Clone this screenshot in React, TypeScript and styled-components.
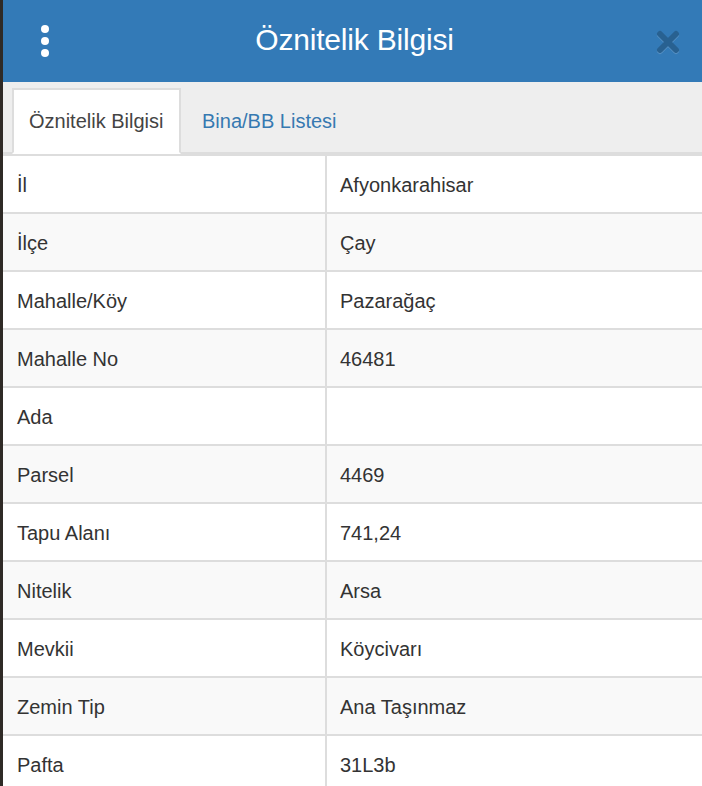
import React from "react";
import styled, { createGlobalStyle } from "styled-components";

const GlobalStyle = createGlobalStyle`
  html, body {
    margin: 0;
    padding: 0;
    background: #2f2a26;
    overflow: hidden;
  }
  body {
    font-family: "Liberation Sans", Arial, Helvetica, sans-serif;
    color: #333;
  }
`;

const Panel = styled.div`
  margin-left: 3px;
  width: 699px;
  height: 786px;
  background: #fff;
  display: flex;
  flex-direction: column;
  overflow: hidden;
`;

const Header = styled.div`
  height: 82px;
  flex-shrink: 0;
  background: #337ab7;
  display: flex;
  align-items: center;
  justify-content: space-between;
  padding: 0 22px 0 34px;
  box-sizing: border-box;
`;

const Title = styled.h1`
  margin: 0 0 2px 0;
  font-size: 30px;
  font-weight: normal;
  color: #fff;
  letter-spacing: -0.2px;
`;

const MenuButton = styled.button`
  border: 0;
  background: none;
  padding: 0;
  width: 16px;
  height: 32px;
  display: flex;
  flex-direction: column;
  align-items: center;
  justify-content: space-between;
  cursor: pointer;
`;

const Dot = styled.span`
  width: 8px;
  height: 8px;
  border-radius: 50%;
  background: #fff;
`;

const CloseButton = styled.button`
  border: 0;
  background: none;
  padding: 0;
  width: 24px;
  height: 24px;
  cursor: pointer;
  opacity: 0.2;
  filter: drop-shadow(0 1px 0 rgba(255, 255, 255, 0.9));
  margin-top: 2px;
`;

const TabBar = styled.div`
  flex-shrink: 0;
  background: #eee;
  padding: 6px 0 0 9px;
  display: flex;
  align-items: flex-end;
  border-bottom: 2px solid #ddd;
`;

const Tab = styled.div<{ $active?: boolean }>`
  height: 66px;
  box-sizing: border-box;
  padding: 0 15px 0 15px;
  display: flex;
  align-items: center;
  font-size: 20px;
  margin-bottom: -2px;
  color: ${(p) => (p.$active ? "#444" : "#3679b1")};
  background: ${(p) => (p.$active ? "#fff" : "transparent")};
  border: 2px solid ${(p) => (p.$active ? "#ddd" : "transparent")};
  border-bottom-color: transparent;
  width: ${(p) => (p.$active ? "169px" : "auto")};
  margin-right: 4px;
`;

const Table = styled.table`
  width: 100%;
  border-collapse: collapse;
  table-layout: fixed;
`;

const Row = styled.tr<{ $striped: boolean }>`
  background: ${(p) => (p.$striped ? "#f9f9f9" : "#fff")};
`;

const Cell = styled.td`
  border-top: 2px solid #ddd;
  border-bottom: 0;
  padding: 15px 14px 13px 14px;
  height: 28px;
  line-height: 28px;
  font-size: 20px;
  color: #333;
  white-space: nowrap;
  &:first-child {
    width: 294px;
    border-right: 2px solid #ddd;
  }
  &:last-child {
    padding-left: 13px;
  }
`;

const rows: [string, string][] = [
  ["İl", "Afyonkarahisar"],
  ["İlçe", "Çay"],
  ["Mahalle/Köy", "Pazarağaç"],
  ["Mahalle No", "46481"],
  ["Ada", ""],
  ["Parsel", "4469"],
  ["Tapu Alanı", "741,24"],
  ["Nitelik", "Arsa"],
  ["Mevkii", "Köycivarı"],
  ["Zemin Tip", "Ana Taşınmaz"],
  ["Pafta", "31L3b"],
];

export default function App() {
  return (
    <>
      <GlobalStyle />
      <Panel>
        <Header>
          <MenuButton aria-label="menu">
            <Dot />
            <Dot />
            <Dot />
          </MenuButton>
          <Title>Öznitelik Bilgisi</Title>
          <CloseButton aria-label="close">
            <svg width="24" height="24" viewBox="0 0 24 24">
              <path
                d="M4 4 L20 20 M20 4 L4 20"
                stroke="#000"
                strokeWidth="6"
                strokeLinecap="round"
              />
            </svg>
          </CloseButton>
        </Header>
        <TabBar>
          <Tab $active>Öznitelik Bilgisi</Tab>
          <Tab>Bina/BB Listesi</Tab>
        </TabBar>
        <Table>
          <tbody>
            {rows.map(([k, v], i) => (
              <Row key={k} $striped={i % 2 === 1}>
                <Cell>{k}</Cell>
                <Cell>{v}</Cell>
              </Row>
            ))}
          </tbody>
        </Table>
      </Panel>
    </>
  );
}
